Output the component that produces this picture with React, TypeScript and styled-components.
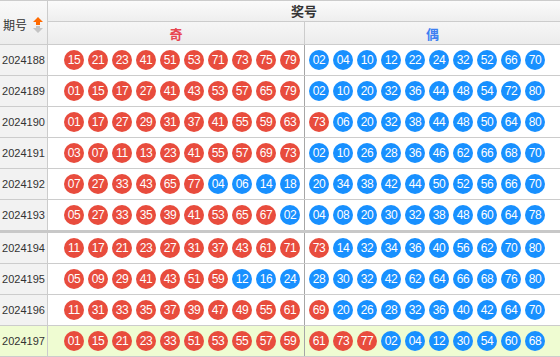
import React from "react";
import styled, { createGlobalStyle } from "styled-components";

const GlobalStyle = createGlobalStyle`
  html, body { margin: 0; padding: 0; background: #ffffff; }
  body { font-family: "Liberation Sans", Arial, "Noto Sans CJK SC", sans-serif; }
  * { box-sizing: border-box; }
`;

const Table = styled.div`
  width: 560px;
  overflow: hidden;
`;

const Header = styled.div`
  display: flex;
  border-top: 1px solid #cccccc;
  border-bottom: 1px solid #cccccc;
`;

const PeriodHead = styled.div`
  width: 48px;
  height: 43px;
  flex: none;
  display: flex;
  align-items: center;
  gap: 6px;
  padding: 4px 0 0 3px;
  border-right: 1px solid #cccccc;
  background: linear-gradient(#f9f9f9, #ececec);
  font-family: "Noto Sans CJK SC", sans-serif;
  font-size: 12px;
  color: #333333;
`;

const HeadRight = styled.div`
  flex: 1;
  display: flex;
  flex-direction: column;
`;

const Title = styled.div`
  height: 21px;
  line-height: 20px;
  border-bottom: 1px solid #cccccc;
  text-align: center;
  background: linear-gradient(#fbfbfb, #eeeeee);
  font-family: "Noto Sans CJK SC", sans-serif;
  font-size: 13px;
  font-weight: 700;
  color: #333333;
`;

const SubRow = styled.div`
  height: 22px;
  display: flex;
  background: linear-gradient(#f6f6f6, #ececec);
`;

const SubHead = styled.div<{ $tone: "odd" | "even" }>`
  ${(p) => (p.$tone === "odd" ? "width: 257px; border-right: 1px solid #cccccc;" : "flex: 1;")}
  text-align: center;
  line-height: 22px;
  padding-top: 1px;
  font-family: "Noto Sans CJK SC", sans-serif;
  font-size: 13px;
  font-weight: 700;
  color: ${(p) => (p.$tone === "odd" ? "#e84652" : "#3d7ff2")};
`;

const Row = styled.div<{ $sep?: boolean; $hl?: boolean }>`
  display: flex;
  height: ${(p) => (p.$sep ? 33 : 31)}px;
  border-bottom: ${(p) => (p.$sep ? "3px solid #c8c8c8" : "1px solid #cccccc")};
  background: ${(p) => (p.$hl ? "#effcd2" : "#ffffff")};
`;

const PeriodCell = styled.div<{ $hl?: boolean }>`
  width: 48px;
  flex: none;
  border-right: 1px solid #cccccc;
  background: ${(p) => (p.$hl ? "#effcd2" : "#f2f2f2")};
  display: flex;
  align-items: center;
  justify-content: center;
  font-size: 11px;
  color: #333333;
`;

const BallCell = styled.div<{ $side: "odd" | "even" }>`
  display: flex;
  align-items: center;
  ${(p) =>
    p.$side === "odd"
      ? "width: 257px; flex: none; padding-left: 14px; border-right: 1px solid #a6a6a6;"
      : "flex: 1; padding-left: 2px;"}
`;

const Ball = styled.span<{ $odd: boolean }>`
  width: 20px;
  height: 20px;
  margin: 0 2px;
  border-radius: 50%;
  flex: none;
  background: ${(p) => (p.$odd ? "#e84c3d" : "#1890ff")};
  color: #ffffff;
  font-size: 12px;
  line-height: 20px;
  text-align: center;
  letter-spacing: -0.3px;
`;

const SortIcon = () => (
  <svg width="10" height="16" viewBox="0 0 10 16">
    <polygon points="5,0 10,5 7,5 7,8 3,8 3,5 0,5" fill="#ff6a00" />
    <polygon points="3,9 7,9 7,11 10,11 5,16 0,11 3,11" fill="#c4c4c4" />
  </svg>
);

const data: [string, string][] = [
  ["2024188", "15 21 23 41 51 53 71 73 75 79 02 04 10 12 22 24 32 52 66 70"],
  ["2024189", "01 15 17 27 41 43 53 57 65 79 02 10 20 32 36 44 48 54 72 80"],
  ["2024190", "01 17 27 29 31 37 41 55 59 63 73 06 20 32 38 44 48 50 64 80"],
  ["2024191", "03 07 11 13 23 41 55 57 69 73 02 10 26 28 36 46 62 66 68 70"],
  ["2024192", "07 27 33 43 65 77 04 06 14 18 20 34 38 42 44 50 52 56 66 70"],
  ["2024193", "05 27 33 35 39 41 53 65 67 02 04 08 20 30 32 38 48 60 64 78"],
  ["2024194", "11 17 21 23 27 31 37 43 61 71 73 14 32 34 36 40 56 62 70 80"],
  ["2024195", "05 09 29 41 43 51 59 12 16 24 28 30 32 42 62 64 66 68 76 80"],
  ["2024196", "11 31 33 35 37 39 47 49 55 61 69 20 26 28 32 36 40 42 64 70"],
  ["2024197", "01 15 21 23 33 51 53 55 57 59 61 73 77 02 04 12 30 54 60 68"],
];

const Balls = ({ nums }: { nums: string[] }) => (
  <>
    {nums.map((n, i) => (
      <Ball key={i} $odd={parseInt(n, 10) % 2 === 1}>
        {n}
      </Ball>
    ))}
  </>
);

export default function App() {
  return (
    <>
      <GlobalStyle />
      <Table>
        <Header>
          <PeriodHead>
            <span>期号</span>
            <SortIcon />
          </PeriodHead>
          <HeadRight>
            <Title>奖号</Title>
            <SubRow>
              <SubHead $tone="odd">奇</SubHead>
              <SubHead $tone="even">偶</SubHead>
            </SubRow>
          </HeadRight>
        </Header>
        {data.map(([period, str]) => {
          const nums = str.split(" ");
          const hl = period === "2024197";
          return (
            <Row key={period} $sep={period === "2024193"} $hl={hl}>
              <PeriodCell $hl={hl}>{period}</PeriodCell>
              <BallCell $side="odd">
                <Balls nums={nums.slice(0, 10)} />
              </BallCell>
              <BallCell $side="even">
                <Balls nums={nums.slice(10)} />
              </BallCell>
            </Row>
          );
        })}
      </Table>
    </>
  );
}
